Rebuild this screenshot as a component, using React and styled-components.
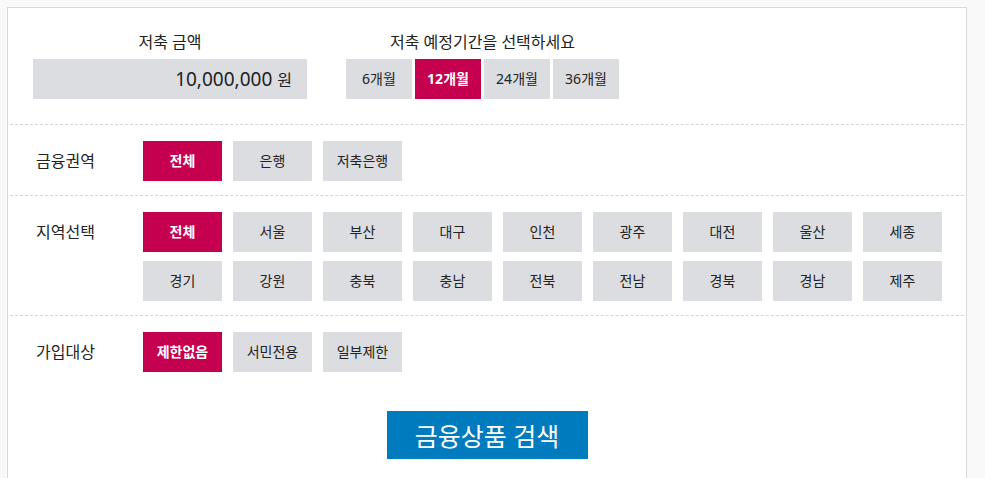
import React from "react";
import styled, { createGlobalStyle, css } from "styled-components";

const GlobalStyle = createGlobalStyle`
  html, body {
    margin: 0;
    padding: 0;
    background: #f9f9f9;
  }
  body {
    font-family: "Noto Sans", "Noto Sans CJK KR", sans-serif;
    color: #222;
  }
  * { box-sizing: border-box; }
`;

const Page = styled.div`
  padding: 7px 0 0 7px;
`;

const Panel = styled.section`
  width: 960px;
  background: #fff;
  border: 1px solid #d9d9d9;
  border-bottom: none;
  padding-bottom: 40px;
`;

const TopSection = styled.div`
  display: flex;
  gap: 39px;
  padding: 24px 0 25px 25px;
`;

const Group = styled.div`
  display: flex;
  flex-direction: column;
  align-items: center;
  gap: 7px;
`;

const GroupLabel = styled.div`
  font-size: 16px;
  line-height: 20px;
  color: #222;
`;

const AmountBox = styled.div`
  width: 274px;
  height: 40px;
  background: #dcdde1;
  display: flex;
  align-items: baseline;
  justify-content: flex-end;
  padding: 0 15px 0 0;
  line-height: 40px;
`;

const Amount = styled.span`
  font-size: 19px;
  color: #222;
`;

const Unit = styled.span`
  font-size: 16px;
  margin-left: 5px;
  color: #222;
`;

const PeriodList = styled.div`
  display: flex;
  gap: 3px;
`;

const chip = css`
  height: 40px;
  border: none;
  padding: 0;
  margin: 0;
  font-family: "Noto Sans", "Noto Sans CJK KR", sans-serif;
  font-size: 14px;
  line-height: 40px;
  text-align: center;
  cursor: pointer;
  background: ${(p) => (p.$active ? "#c4004f" : "#dcdde1")};
  color: ${(p) => (p.$active ? "#fff" : "#222")};
  font-weight: ${(p) => (p.$active ? 700 : 400)};
`;

const PeriodButton = styled.button`
  ${chip};
  width: 66px;
`;

const Divider = styled.div`
  margin: 0 2px;
  border-top: 1px dashed #d6d6d6;
`;

const FilterRow = styled.div`
  display: flex;
  align-items: flex-start;
  padding: 16px 0 14px 28px;
`;

const RowLabel = styled.div`
  width: 107px;
  flex: none;
  font-size: 16px;
  line-height: 40px;
  color: #222;
`;

const OptionGrid = styled.div`
  display: grid;
  grid-template-columns: repeat(9, 79px);
  column-gap: 11px;
  row-gap: 9px;
`;

const OptionButton = styled.button`
  ${chip};
  width: 79px;
`;

const SearchArea = styled.div`
  display: flex;
  justify-content: center;
  padding-top: 25px;
`;

const SearchButton = styled.button`
  width: 201px;
  height: 48px;
  border: none;
  background: #007bbd;
  color: #fff;
  font-family: "Noto Sans", "Noto Sans CJK KR", sans-serif;
  font-size: 25px;
  line-height: 48px;
  cursor: pointer;
`;

const periods = ["6개월", "12개월", "24개월", "36개월"];
const sectors = ["전체", "은행", "저축은행"];
const regions = [
  "전체", "서울", "부산", "대구", "인천", "광주", "대전", "울산", "세종",
  "경기", "강원", "충북", "충남", "전북", "전남", "경북", "경남", "제주",
];
const targets = ["제한없음", "서민전용", "일부제한"];

function Filter({ label, items, active }) {
  return (
    <FilterRow>
      <RowLabel>{label}</RowLabel>
      <OptionGrid>
        {items.map((it, i) => (
          <OptionButton key={i} $active={i === active}>
            {it}
          </OptionButton>
        ))}
      </OptionGrid>
    </FilterRow>
  );
}

export default function App() {
  return (
    <>
      <GlobalStyle />
      <Page>
        <Panel>
          <TopSection>
            <Group>
              <GroupLabel>저축 금액</GroupLabel>
              <AmountBox>
                <Amount>10,000,000</Amount>
                <Unit>원</Unit>
              </AmountBox>
            </Group>
            <Group>
              <GroupLabel>저축 예정기간을 선택하세요</GroupLabel>
              <PeriodList>
                {periods.map((p, i) => (
                  <PeriodButton key={p} $active={i === 1}>
                    {p}
                  </PeriodButton>
                ))}
              </PeriodList>
            </Group>
          </TopSection>
          <Divider />
          <Filter label="금융권역" items={sectors} active={0} />
          <Divider />
          <Filter label="지역선택" items={regions} active={0} />
          <Divider />
          <Filter label="가입대상" items={targets} active={0} />
          <SearchArea>
            <SearchButton>금융상품 검색</SearchButton>
          </SearchArea>
        </Panel>
      </Page>
    </>
  );
}
